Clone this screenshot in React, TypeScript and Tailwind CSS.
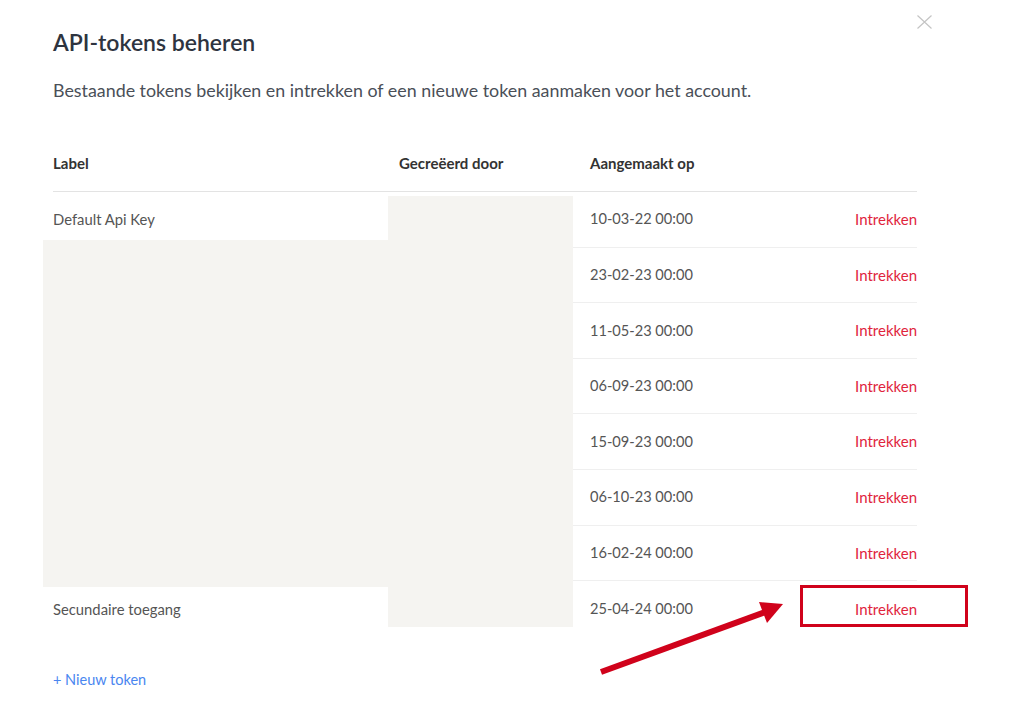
const rows = [
  { label: 'Default Api Key', date: '10-03-22 00:00' },
  { label: '', date: '23-02-23 00:00' },
  { label: '', date: '11-05-23 00:00' },
  { label: '', date: '06-09-23 00:00' },
  { label: '', date: '15-09-23 00:00' },
  { label: '', date: '06-10-23 00:00' },
  { label: '', date: '16-02-24 00:00' },
  { label: 'Secundaire toegang', date: '25-04-24 00:00' },
];

export default function App() {
  return (
    <div className="relative w-[1010px] h-[706px] bg-white overflow-hidden font-['Lato','Liberation_Sans',sans-serif]">
      {/* close */}
      <button className="absolute left-[917px] top-[15px] w-[15px] h-[14px]">
        <svg width="15" height="14" viewBox="0 0 15 14">
          <path d="M0.5 0.5 L14.5 13.5 M14.5 0.5 L0.5 13.5" stroke="#c4c4c4" strokeWidth="1.2" fill="none" />
        </svg>
      </button>

      <div className="pl-[53px] pt-[28px] w-[917px]">
        <h2 className="text-[23px] leading-[28px] font-semibold text-[#2e3440]">API-tokens beheren</h2>
        <p className="mt-[20px] text-[17.85px] leading-[28px] text-[#4a4f58]">
          Bestaande tokens bekijken en intrekken of een nieuwe token aanmaken voor het account.
        </p>

        <div className="mt-[31px]">
          <div className="grid grid-cols-[346px_191px_1fr_auto] items-center h-[57px] border-b border-[#e3e3e3] text-[15px] font-bold text-[#333]">
            <div>Label</div>
            <div>Gecreëerd door</div>
            <div>Aangemaakt op</div>
            <div></div>
          </div>
          {rows.map((r, i) => (
            <div
              key={i}
              className={`grid grid-cols-[346px_191px_1fr_auto] items-center h-[55.6px] text-[15px] text-[#555] ${i < rows.length - 1 ? 'border-b border-[#efefef]' : ''}`}
            >
              <div className="text-[14.8px]">{r.label}</div>
              <div></div>
              <div className="text-[14.6px]">{r.date}</div>
              <div className="text-[#e0243c]">Intrekken</div>
            </div>
          ))}
        </div>

        <div className="mt-[33px] text-[14.5px] leading-[20px] text-[#4a86f0]">+ Nieuw token</div>
      </div>

      {/* redactions */}
      <div className="absolute left-[388px] top-[196px] w-[185px] h-[431px] bg-[#f5f4f1]" />
      <div className="absolute left-[43px] top-[240px] w-[345px] h-[347px] bg-[#f5f4f1]" />

      {/* annotation */}
      <div className="absolute left-[800px] top-[585px] w-[168px] h-[42px] border-[3px] border-[#d0021b]" />
      <svg className="absolute left-0 top-0" width="1010" height="706" viewBox="0 0 1010 706">
        <line x1="601" y1="672" x2="768" y2="611" stroke="#d0021b" strokeWidth="6" />
        <polygon points="783,604 759,602 767,623" fill="#d0021b" />
      </svg>
    </div>
  );
}
